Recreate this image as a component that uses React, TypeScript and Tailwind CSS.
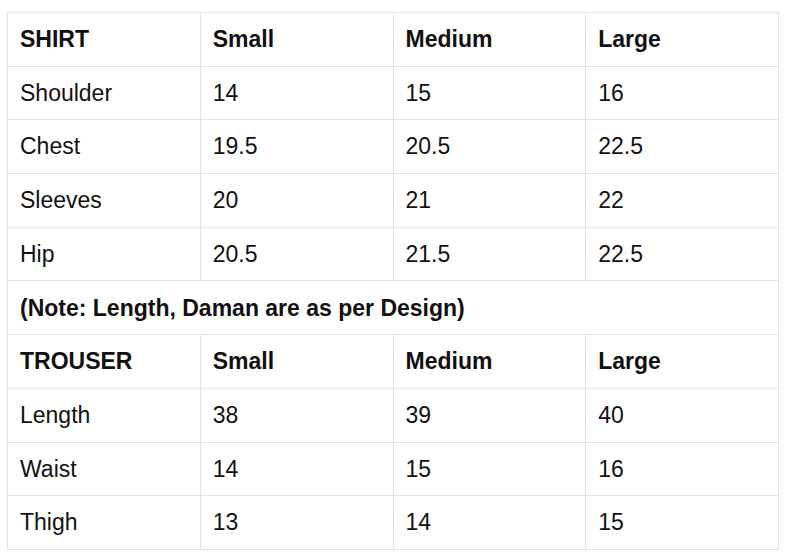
import React from 'react';

type Row = {
  label: string;
  values: string[];
  head?: boolean;
};

const shirt: Row[] = [
  { label: 'SHIRT', values: ['Small', 'Medium', 'Large'], head: true },
  { label: 'Shoulder', values: ['14', '15', '16'] },
  { label: 'Chest', values: ['19.5', '20.5', '22.5'] },
  { label: 'Sleeves', values: ['20', '21', '22'] },
  { label: 'Hip', values: ['20.5', '21.5', '22.5'] },
];

const trouser: Row[] = [
  { label: 'TROUSER', values: ['Small', 'Medium', 'Large'], head: true },
  { label: 'Length', values: ['38', '39', '40'] },
  { label: 'Waist', values: ['14', '15', '16'] },
  { label: 'Thigh', values: ['13', '14', '15'] },
];

const cell = 'border border-[#e4e4de] px-[12px] align-middle';

const SizeRow = ({ row }: { row: Row }) => (
  <tr className="h-[53.7px]">
    {[row.label, ...row.values].map((v, i) => (
      <td key={i} className={`${cell} ${row.head ? 'font-bold' : ''}`}>
        {v}
      </td>
    ))}
  </tr>
);

const App = () => {
  return (
    <div className="bg-white w-[787px] h-[558px] pl-[7px] pt-[12px] font-[Liberation_Sans,Arial,sans-serif] text-[23px] text-[#111]">
      <table className="w-[772px] table-fixed border-collapse font-[Liberation_Sans,Arial,sans-serif]">
        <tbody>
          {shirt.map((r, i) => (
            <SizeRow key={i} row={r} />
          ))}
          <tr className="h-[53.7px]">
            <td colSpan={4} className={`${cell} font-bold`}>
              (Note: Length, Daman are as per Design)
            </td>
          </tr>
          {trouser.map((r, i) => (
            <SizeRow key={i} row={r} />
          ))}
        </tbody>
      </table>
    </div>
  );
};

export default App;
